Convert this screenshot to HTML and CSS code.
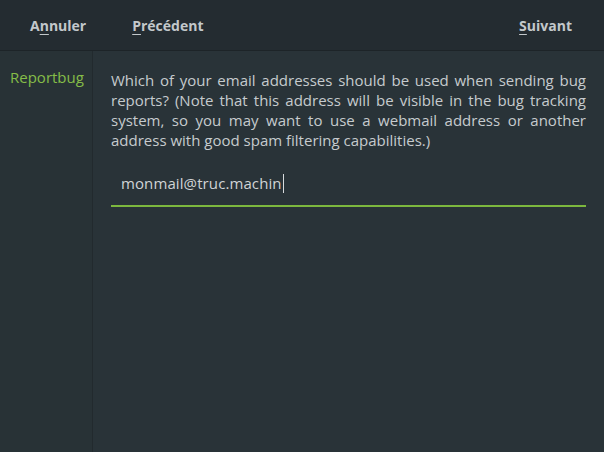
FILE: index.html
```html
<!DOCTYPE html>
<html lang="fr">
<head>
<meta charset="utf-8">
<title>Reportbug</title>
<link rel="stylesheet" href="styles.css">
</head>
<body>
<div class="window">
  <header class="headerbar">
    <div class="btn btn-cancel">A<u>n</u>nuler</div>
    <div class="btn btn-prev"><u>P</u>récédent</div>
    <div class="spacer"></div>
    <div class="btn btn-next"><u>S</u>uivant</div>
  </header>
  <div class="content">
    <aside class="sidebar">
      <div class="step">Reportbug</div>
    </aside>
    <main class="page">
      <p class="question">Which of your email addresses should be used when sending bug reports? (Note that this address will be visible in the bug tracking system, so you may want to use a webmail address or another address with good spam filtering capabilities.)</p>
      <div class="entry"><span class="entry-text">monmail@truc.machin</span><span class="caret"></span></div>
    </main>
  </div>
</div>
</body>
</html>
```
FILE: styles.css
```css
html, body {
  margin: 0;
  padding: 0;
  height: 100%;
}
body {
  background: #293338;
  font-family: "Open Sans", "Noto Sans", sans-serif;
  font-size: 15px;
  color: #c6cbce;
}
.window {
  display: flex;
  flex-direction: column;
  height: 100%;
}
.headerbar {
  flex: 0 0 auto;
  height: 50px;
  display: flex;
  align-items: center;
  background: #242c31;
  border-bottom: 1px solid #1d2428;
  box-sizing: content-box;
  padding: 0 32px 0 30px;
}
.btn {
  font-weight: bold;
  color: #c3c8cb;
  font-size: 14px;
}
.btn u {
  text-underline-offset: 3px;
  text-decoration-thickness: 1px;
}
.btn-prev {
  margin-left: 46px;
}
.spacer {
  flex: 1;
}
.content {
  flex: 1;
  display: flex;
}
.sidebar {
  width: 93px;
  flex: 0 0 auto;
  background: #283236;
  border-right: 1px solid #222a2e;
  padding-top: 16px;
  box-sizing: border-box;
}
.step {
  color: #85bd48;
  padding-left: 10px;
  line-height: 20px;
}
.page {
  flex: 1;
  padding: 19px 18px 0 18px;
}
.question {
  margin: 0;
  line-height: 20px;
  text-align: justify;
}
.entry {
  margin-top: 11px;
  height: 44px;
  border-bottom: 2px solid #7cb83e;
  display: flex;
  align-items: center;
  padding-left: 10px;
}
.entry-text {
  color: #d0d4d6;
  letter-spacing: 0.1px;
}
.caret {
  display: inline-block;
  width: 1px;
  height: 19px;
  background: #d6dadc;
  margin-left: 1px;
}
```
